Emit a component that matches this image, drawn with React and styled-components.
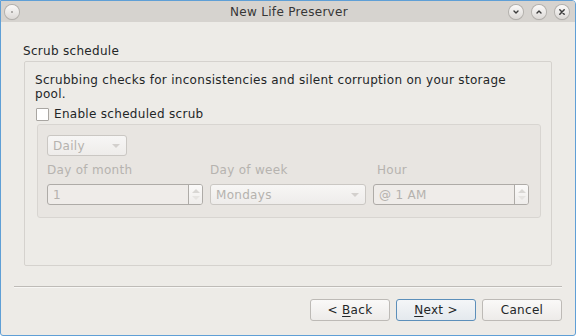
import React from 'react';
import styled, { createGlobalStyle } from 'styled-components';

const GlobalStyle = createGlobalStyle`
    html, body {
        margin: 0;
        padding: 0;
        background: #ffffff;
    }
    body {
        font-family: "DejaVu Sans", "Liberation Sans", sans-serif;
        font-size: 12px;
        letter-spacing: 0.3px;
        color: #232627;
    }
    * {
        box-sizing: border-box;
    }
`

const Window = styled.div`
    width: 576px;
    height: 336px;
    display: flex;
    flex-direction: column;
    background: #edebe7;
    border: 1px solid #5f9fd6;
    border-top-right-radius: 4px;
    border-bottom-left-radius: 3px;
    border-bottom-right-radius: 3px;
    overflow: hidden;
`

const TitleBar = styled.div`
    height: 21px;
    flex: none;
    display: flex;
    align-items: center;
    padding: 0 6px 0 4px;
    background: #d6d3cf;
`

const Title = styled.div`
    flex: 1;
    text-align: center;
    font-size: 12px;
    line-height: 14px;
    color: #363636;
    padding-left: 50px;
`

const TitleButtons = styled.div`
    display: flex;
    gap: 9px;
`

const RoundButton = styled.div`
    width: 14px;
    height: 14px;
    border-radius: 50%;
    display: flex;
    align-items: center;
    justify-content: center;
    background: linear-gradient(#fbfaf9, #dcd9d6);
    box-shadow: 0 0 0 1px #b3b0ac, 0 1px 1px rgba(0, 0, 0, 0.15);
`

const Body = styled.div`
    flex: 1;
    display: flex;
    flex-direction: column;
    padding: 22px 13px 0 13px;
`

const Heading = styled.div`
    line-height: 14px;
    margin-left: 9px;
`

const GroupBox = styled.div`
    margin: 3px 10px 0 10px;
    height: 205px;
    border: 1px solid #d5d2ce;
    border-radius: 2px;
    padding: 11px 10px 0 10px;
    display: flex;
    flex-direction: column;
`

const Description = styled.div`
    line-height: 14px;
`

const CheckRow = styled.label`
    margin-top: 6px;
    height: 14px;
    display: flex;
    align-items: center;
    gap: 5px;
    line-height: 14px;
`

const CheckBox = styled.span`
    width: 13px;
    height: 13px;
    margin-left: 1px;
    border: 1px solid #a9a6a2;
    border-radius: 1px;
    background: #ffffff;
`

const SubGroup = styled.div`
    margin: 3px 0 0 2px;
    height: 94px;
    border: 1px solid #d8d5d1;
    border-radius: 3px;
    background: #e8e5e1;
    padding: 10px 11px 0 9px;
    display: flex;
    flex-direction: column;
`

const Combo = styled.div`
    width: ${p => p.$width || 'auto'};
    height: 21px;
    display: flex;
    align-items: center;
    justify-content: space-between;
    padding: 0 6px 0 5px;
    border: 1px solid #cac7c3;
    border-radius: 3px;
    background: linear-gradient(#f7f6f5, #eeecea);
    color: #b5b2ae;
`

const Arrow = styled.span`
    width: 0;
    height: 0;
    border-left: 4px solid transparent;
    border-right: 4px solid transparent;
    border-top: 4px solid #d3d0cd;
`

const Fields = styled.div`
    margin-top: 7px;
    display: grid;
    grid-template-columns: 1fr 1fr 1fr;
    column-gap: 7px;
    row-gap: 7px;
`

const FieldLabel = styled.div`
    line-height: 14px;
    color: #b6b3af;
    padding-left: ${p => p.$indent || 0}px;
`

const SpinBox = styled.div`
    height: 21px;
    display: flex;
    border: 1px solid #aeaba7;
    border-radius: 3px;
    background: #efece9;
    color: #b5b2ae;
    overflow: hidden;
`

const SpinText = styled.div`
    flex: 1;
    display: flex;
    align-items: center;
    padding-left: 5px;
`

const SpinButtons = styled.div`
    width: 14px;
    border-left: 1px solid #aeaba7;
    background: linear-gradient(#fbfaf9, #efedeb);
    display: flex;
    flex-direction: column;
    align-items: center;
    justify-content: space-around;
    padding: 3px 0;
`

const SpinArrow = styled.span`
    width: 0;
    height: 0;
    border-left: 4px solid transparent;
    border-right: 4px solid transparent;
    ${p => p.$up
        ? 'border-bottom: 4px solid #d9d7d4;'
        : 'border-top: 4px solid #e6e4e1;'}
`

const Separator = styled.div`
    margin-top: 20px;
    height: 2px;
    border-top: 1px solid #bebbb7;
    border-bottom: 1px solid #f7f6f4;
`

const ButtonRow = styled.div`
    margin-top: 11px;
    display: flex;
    justify-content: flex-end;
    gap: 6px;
`

const Button = styled.div`
    width: 80px;
    height: 22px;
    display: flex;
    align-items: center;
    justify-content: center;
    white-space: pre;
    border: 1px solid ${p => p.$default ? '#5c8fba' : '#bdbab6'};
    border-radius: 3px;
    background: ${p => p.$default
        ? 'linear-gradient(#f4f6f8, #e4e9ee)'
        : 'linear-gradient(#faf9f8, #edebe9)'};
    color: #232627;
    line-height: 14px;
`

const Mnemonic = styled.span`
    text-decoration: underline;
    text-underline-offset: 2px;
`

const Glyph = ({ d, sw = 1.4 }) => (
    <svg width="8" height="8" viewBox="0 0 8 8">
        <path d={d} fill="none" stroke="#3c3c3c" strokeWidth={sw} strokeLinecap="round" strokeLinejoin="round" />
    </svg>
);

export default function App() {
    return (
        <>
            <GlobalStyle />
            <Window>
                <TitleBar>
                    <RoundButton>
                        <svg width="4" height="4" viewBox="0 0 4 4">
                            <circle cx="2" cy="2" r="1" fill="#9a9794" />
                        </svg>
                    </RoundButton>
                    <Title>New Life Preserver</Title>
                    <TitleButtons>
                        <RoundButton><Glyph d="M2 3 L4 5 L6 3" /></RoundButton>
                        <RoundButton><Glyph d="M2 5 L4 3 L6 5" /></RoundButton>
                        <RoundButton><Glyph d="M1.8 1.8 L6.2 6.2 M6.2 1.8 L1.8 6.2" sw={1.5} /></RoundButton>
                    </TitleButtons>
                </TitleBar>
                <Body>
                    <Heading>Scrub schedule</Heading>
                    <GroupBox>
                        <Description>
                            Scrubbing checks for inconsistencies and silent corruption on your storage pool.
                        </Description>
                        <CheckRow>
                            <CheckBox />
                            Enable scheduled scrub
                        </CheckRow>
                        <SubGroup>
                            <Combo $width="80px">
                                <span>Daily</span>
                                <Arrow />
                            </Combo>
                            <Fields>
                                <FieldLabel>Day of month</FieldLabel>
                                <FieldLabel>Day of week</FieldLabel>
                                <FieldLabel $indent={4}>Hour</FieldLabel>
                                <SpinBox>
                                    <SpinText>1</SpinText>
                                    <SpinButtons>
                                        <SpinArrow $up />
                                        <SpinArrow />
                                    </SpinButtons>
                                </SpinBox>
                                <Combo>
                                    <span>Mondays</span>
                                    <Arrow />
                                </Combo>
                                <SpinBox>
                                    <SpinText>@ 1 AM</SpinText>
                                    <SpinButtons>
                                        <SpinArrow $up />
                                        <SpinArrow />
                                    </SpinButtons>
                                </SpinBox>
                            </Fields>
                        </SubGroup>
                    </GroupBox>
                    <Separator />
                    <ButtonRow>
                        <Button>{'< '}<Mnemonic>B</Mnemonic>ack</Button>
                        <Button $default><Mnemonic>N</Mnemonic>{'ext >'}</Button>
                        <Button>Cancel</Button>
                    </ButtonRow>
                </Body>
            </Window>
        </>
    );
}
